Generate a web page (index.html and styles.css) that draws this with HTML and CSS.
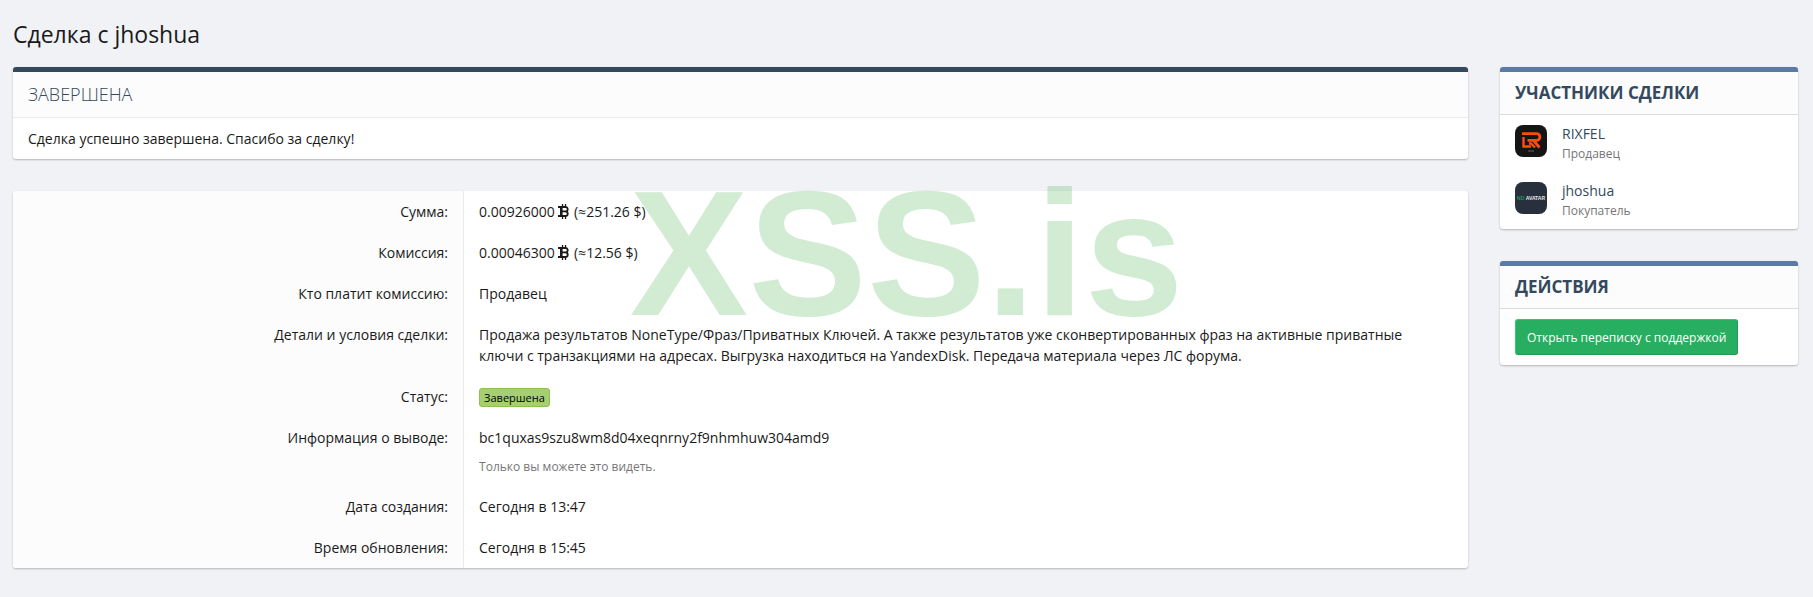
FILE: index.html
```html
<!DOCTYPE html>
<html lang="ru">
<head>
    <meta charset="UTF-8">
    <meta name="viewport" content="width=device-width, initial-scale=1.0">
    <title>Сделка с jhoshua</title>
    <link rel="stylesheet" href="styles.css">
</head>
<body>
    <svg class="sprite" aria-hidden="true">
        <symbol id="btc" viewBox="0 0 12 15">
            <path d="M4.500 0v3M7.500 0v3M4.500 12v3M7.500 12v3" stroke-width="1.300"/>
            <path d="M0 3h7.500a2 2 0 0 1 0 4.400H4M7.500 7.500a2.200 2.200 0 0 1 0 4.500H0" stroke-width="1.800"/>
            <path d="M3.300 3v9" stroke-width="2.600"/>
        </symbol>
    </svg>

    <div class="page">
        <h1 class="page-title">Сделка с jhoshua</h1>

        <div class="layout">
            <main class="main">
                <section class="block block-status">
                    <h2 class="block-header">ЗАВЕРШЕНА</h2>
                    <div class="block-body">Сделка успешно завершена. Спасибо за сделку!</div>
                </section>

                <dl class="block details">
                    <div class="row">
                        <dt>Сумма:</dt>
                        <dd>0.00926000 <svg class="btc"><use href="#btc"/></svg> (≈251.26 $)</dd>
                    </div>
                    <div class="row">
                        <dt>Комиссия:</dt>
                        <dd>0.00046300 <svg class="btc"><use href="#btc"/></svg> (≈12.56 $)</dd>
                    </div>
                    <div class="row">
                        <dt>Кто платит комиссию:</dt>
                        <dd>Продавец</dd>
                    </div>
                    <div class="row">
                        <dt>Детали и условия сделки:</dt>
                        <dd>Продажа результатов NoneType/Фраз/Приватных Ключей. А также результатов уже сконвертированных фраз на активные приватные<br>ключи с транзакциями на адресах. Выгрузка находиться на YandexDisk. Передача материала через ЛС форума.</dd>
                    </div>
                    <div class="row">
                        <dt>Статус:</dt>
                        <dd><span class="label">Завершена</span></dd>
                    </div>
                    <div class="row">
                        <dt>Информация о выводе:</dt>
                        <dd>bc1quxas9szu8wm8d04xeqnrny2f9nhmhuw304amd9
                            <div class="hint">Только вы можете это видеть.</div>
                        </dd>
                    </div>
                    <div class="row">
                        <dt>Дата создания:</dt>
                        <dd>Сегодня в 13:47</dd>
                    </div>
                    <div class="row">
                        <dt>Время обновления:</dt>
                        <dd>Сегодня в 15:45</dd>
                    </div>
                </dl>
            </main>

            <aside class="sidebar">
                <section class="block block-side">
                    <h3 class="block-header">УЧАСТНИКИ СДЕЛКИ</h3>
                    <ul class="members">
                        <li class="member">
                            <svg class="avatar" viewBox="0 0 32 32">
                                <rect width="32" height="32" fill="#151515"/>
                                <path d="M7 8.600h14.500a2.800 2.800 0 0 1 0 6.800H12.500M18.500 15.500l6 7" fill="none" stroke="#ff4d0a" stroke-width="2.800"/>
                                <path d="M8.500 12v9.500H16M14 18.500h2l4 4" fill="none" stroke="#ff4d0a" stroke-width="2.400"/>
                                <path d="M13 26h6" stroke="#666" stroke-width="1"/>
                            </svg>
                            <div>
                                <a class="member-name" href="#">RIXFEL</a>
                                <div class="member-role">Продавец</div>
                            </div>
                        </li>
                        <li class="member">
                            <svg class="avatar" viewBox="0 0 32 32">
                                <rect width="32" height="32" fill="#28303d"/>
                                <text class="no-avatar" x="16" y="18" text-anchor="middle"><tspan class="no">NO</tspan> AVATAR</text>
                            </svg>
                            <div>
                                <a class="member-name" href="#">jhoshua</a>
                                <div class="member-role">Покупатель</div>
                            </div>
                        </li>
                    </ul>
                </section>

                <section class="block block-side">
                    <h3 class="block-header">ДЕЙСТВИЯ</h3>
                    <div class="block-body">
                        <button class="button" type="button">Открыть переписку с поддержкой</button>
                    </div>
                </section>
            </aside>
        </div>

        <div class="watermark">XSS.is</div>
    </div>
</body>
</html>
```
FILE: styles.css
```css
* {
    box-sizing: border-box;
}
body {
    margin: 0;
    background-color: #f1f2f6;
    color: #1a1a1a;
    font-family: "Segoe UI", "Open Sans", "Noto Sans", sans-serif;
    font-size: 14px;
    line-height: 21px;
}
.sprite {
    position: absolute;
    width: 0;
    height: 0;
}
.page {
    position: relative;
    padding: 17px 15px 28px 13px;
}
.page-title {
    margin: 0 0 16px;
    font-size: 23px;
    font-weight: 400;
    line-height: 34px;
}
.layout {
    display: flex;
    align-items: flex-start;
    gap: 32px;
}
.main {
    flex: 1;
    min-width: 0;
}
.sidebar {
    width: 298px;
    flex-shrink: 0;
}
.block {
    margin: 0 0 32px;
    background-color: #fff;
    border-radius: 3px;
    box-shadow: 0 1px 2px rgba(0, 0, 0, 0.25);
    overflow: hidden;
}
.block:last-child {
    margin-bottom: 0;
}
.block-header {
    margin: 0;
    padding: 10px 15px;
    background-color: #fcfcfc;
    color: #34495e;
}
.block-status {
    border-top: 5px solid #34495e;
}
.block-status .block-header {
    border-bottom: 1px solid #ebebeb;
    font-size: 18px;
    font-weight: 300;
    line-height: 25px;
}
.block-status .block-body {
    padding: 10px 15px;
}
.block-side {
    border-top: 5px solid #5b7ba7;
}
.block-side .block-header {
    border-bottom: 1px solid #dcdcdc;
    font-size: 17px;
    font-weight: 700;
    line-height: 22px;
}
.block-side .block-body {
    padding: 10px 15px;
}

.row {
    display: flex;
}
.row dt {
    width: 31%;
    flex-shrink: 0;
    padding: 10px 15px;
    background-color: #fcfcfc;
    border-right: 1px solid #ebebeb;
    text-align: right;
}
.row dd {
    flex: 1;
    margin: 0;
    padding: 10px 15px;
}
.btc {
    width: 12px;
    height: 15px;
    vertical-align: -2px;
    fill: none;
    stroke: #1a1a1a;
}
.label {
    display: inline-block;
    margin-top: 2px;
    padding: 0 4px;
    border: 1px solid #8bc34a;
    border-radius: 3px;
    background-color: #a6cf74;
    color: #000;
    font-size: 11px;
    line-height: 17px;
    vertical-align: top;
}
.hint {
    margin-top: 10px;
    color: #767676;
    font-size: 12px;
    line-height: 18px;
}

.members {
    margin: 0;
    padding: 0;
    list-style: none;
}
.member {
    display: flex;
    gap: 15px;
    padding: 8px 15px;
}
.avatar {
    width: 32px;
    height: 32px;
    margin-top: 2px;
    border-radius: 8px;
}
.no-avatar {
    fill: #e4e6e9;
    font-family: "Liberation Sans", Arial, sans-serif;
    font-size: 5px;
    font-weight: 700;
}
.no-avatar .no {
    fill: #1f9a4c;
}
.member-name {
    display: block;
    color: #34495e;
    text-decoration: none;
}
.member-role {
    color: #767676;
    font-size: 12px;
    line-height: 20px;
}
.button {
    display: block;
    height: 36px;
    padding: 0 11px;
    border: 1px solid;
    border-color: #2ecc71 #239a55 #239a55 #2ecc71;
    border-radius: 3px;
    background-color: #27ae60;
    color: #fff;
    font-family: inherit;
    font-size: 12px;
    cursor: pointer;
}

.watermark {
    position: absolute;
    top: 154px;
    left: 0;
    right: 0;
    color: rgba(76, 175, 80, 0.25);
    font-family: "Liberation Sans", Arial, sans-serif;
    font-size: 178px;
    font-weight: 700;
    line-height: 200px;
    text-align: center;
    pointer-events: none;
}
```
